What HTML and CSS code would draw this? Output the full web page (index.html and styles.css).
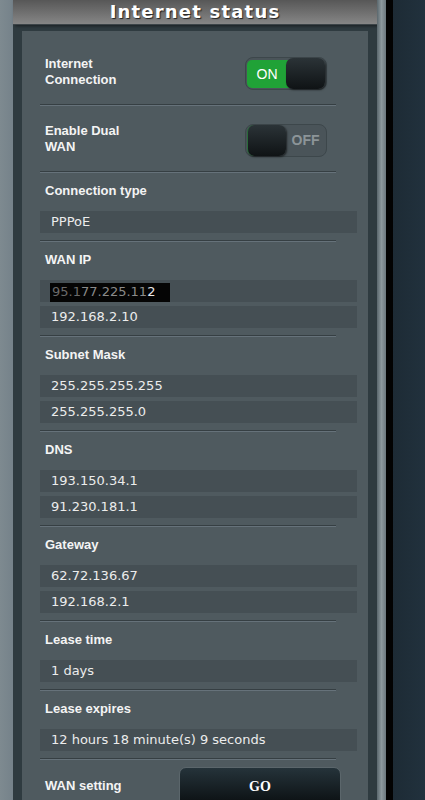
FILE: index.html
```html
<!DOCTYPE html>
<html lang="en">
<head>
    <meta charset="UTF-8">
    <meta name="viewport" content="width=device-width, initial-scale=1.0">
    <title>Internet status</title>
    <link rel="stylesheet" href="styles.css">
</head>
<body>
    <div class="frame">
        <div class="edge-left"></div>
        <div class="status">
            <header class="status-head">
                <h1>Internet status</h1>
            </header>
            <main class="panel">
                <div class="switch-row">
                    <span class="label">Internet<br>Connection</span>
                    <div class="toggle on">
                        <span class="track">ON</span>
                        <span class="knob"></span>
                    </div>
                </div>
                <div class="divider"></div>
                <div class="switch-row">
                    <span class="label">Enable Dual<br>WAN</span>
                    <div class="toggle off">
                        <span class="knob"></span>
                        <span class="track">OFF</span>
                    </div>
                </div>
                <div class="divider"></div>

                <section class="item">
                    <h2 class="label">Connection type</h2>
                    <div class="value">PPPoE</div>
                </section>
                <div class="divider"></div>

                <section class="item">
                    <h2 class="label">WAN IP</h2>
                    <div class="value"><span class="redact"><span class="dim">95.1</span><span class="mid">77.225.11</span>2</span></div>
                    <div class="value">192.168.2.10</div>
                </section>
                <div class="divider"></div>

                <section class="item">
                    <h2 class="label">Subnet Mask</h2>
                    <div class="value">255.255.255.255</div>
                    <div class="value">255.255.255.0</div>
                </section>
                <div class="divider"></div>

                <section class="item">
                    <h2 class="label">DNS</h2>
                    <div class="value">193.150.34.1</div>
                    <div class="value">91.230.181.1</div>
                </section>
                <div class="divider"></div>

                <section class="item">
                    <h2 class="label">Gateway</h2>
                    <div class="value">62.72.136.67</div>
                    <div class="value">192.168.2.1</div>
                </section>
                <div class="divider"></div>

                <section class="item">
                    <h2 class="label">Lease time</h2>
                    <div class="value">1 days</div>
                </section>
                <div class="divider"></div>

                <section class="item">
                    <h2 class="label">Lease expires</h2>
                    <div class="value">12 hours 18 minute(s) 9 seconds</div>
                </section>
                <div class="divider"></div>

                <div class="go-row">
                    <span class="label">WAN setting</span>
                    <button class="go">GO</button>
                </div>
            </main>
        </div>
        <div class="edge-right"></div>
        <div class="edge-black"></div>
        <div class="backdrop"></div>
    </div>
</body>
</html>
```

FILE: styles.css
```css
body {
    margin: 0;
    padding: 0;
    background: #21313d;
    font-family: "Liberation Sans", Arial, sans-serif;
    color: #f2f2f2;
    overflow: hidden;
}

.frame {
    display: flex;
    height: 800px;
}

.edge-left {
    width: 13px;
    background: linear-gradient(to right, #7e8a90, #75828a);
}

.status {
    width: 364px;
    background: #2f3b40;
    display: flex;
    flex-direction: column;
}

.status-head {
    height: 25px;
    background: linear-gradient(#575757, #868686);
    border-bottom: 1px solid #3c4448;
    box-shadow: 2px 1px 3px rgba(0, 0, 0, 0.5);
    box-sizing: border-box;
    text-align: center;
}

.status-head h1 {
    margin: 0;
    font-family: "DejaVu Sans", Verdana, sans-serif;
    font-size: 18px;
    font-weight: bold;
    letter-spacing: 1.2px;
    line-height: 24px;
    color: #fff;
    text-shadow: 1px 1px 1px #222;
}

.panel {
    margin: 6px 9px 0 9px;
    background: #4f5a5f;
    flex: 1;
    padding: 26px 11px 0 18px;
}

.label {
    font-size: 13px;
    font-weight: bold;
    line-height: 16px;
    color: #f4f4f4;
    margin: 0;
}

.switch-row {
    display: flex;
    align-items: center;
    justify-content: space-between;
    padding: 0 30px 0 5px;
    height: 33px;
}

.switch-row .label {
    margin-top: -4px;
}

.toggle {
    width: 82px;
    height: 33px;
    box-sizing: border-box;
    border: 1px solid #3d474b;
    border-radius: 8px;
    background: #4a5459;
    display: flex;
    align-items: center;
    padding: 1px;
}

.knob {
    width: 39px;
    height: 31px;
    box-sizing: border-box;
    border-radius: 7px;
    background: linear-gradient(#2b3337, #0f1315);
    box-shadow: 1px 1px 2px rgba(0, 0, 0, 0.6);
}

.track {
    flex: 1;
    font-size: 14px;
    text-align: center;
}

.toggle.on .track {
    height: 28px;
    line-height: 28px;
    background: #20a237;
    color: #fff;
    border-radius: 5px 0 0 5px;
    margin-right: -3px;
    text-indent: -2px;
}

.toggle.on .knob {
    position: relative;
}

.toggle.off .track {
    color: #8c9498;
    font-weight: bold;
    line-height: 29px;
}

.toggle.off .knob {
    border-left: 1px solid #2a6b3a;
}

.divider {
    height: 0;
    border-top: 1px solid #363f43;
    border-bottom: 1px solid #66727a;
    margin: 14px 21px 0 0;
}

.switch-row + .divider + .switch-row {
    margin-top: 18px;
}

.item {
    padding-top: 10px;
    padding-bottom: 7px;
}

.item .label {
    padding-left: 5px;
    margin-bottom: 12px;
}

.item + .divider {
    margin-top: 0;
}

.value {
    height: 22px;
    line-height: 22px;
    background: #454f54;
    padding-left: 11px;
    font-family: "DejaVu Sans", Verdana, sans-serif;
    font-size: 13px;
    color: #ececec;
}

.value + .value {
    margin-top: 4px;
}

.redact {
    display: inline-block;
    background: #050505;
    margin-left: -1px;
    margin-top: 3px;
    padding: 0 15px 0 2px;
    height: 19px;
    line-height: 17px;
    vertical-align: top;
    color: #e8e8e8;
}

.redact .dim {
    color: #6a6a6a;
}

.redact .mid {
    color: #8a8a8a;
}

.go-row {
    display: flex;
    align-items: center;
    margin-top: 7px;
    padding-left: 5px;
}

.go-row .label {
    width: 134px;
    margin-top: 4px;
}

.go {
    width: 162px;
    height: 40px;
    border: 1px solid #5b666b;
    border-radius: 7px;
    background: linear-gradient(#25333a, #0a0e10);
    color: #fff;
    font-family: "Liberation Serif", "Times New Roman", serif;
    font-size: 14px;
    font-weight: bold;
    padding: 0;
    margin-bottom: -6px;
}

.edge-right {
    width: 9px;
    background: linear-gradient(to right, #5a676d, #8d999e, #6b777d);
}

.edge-black {
    width: 7px;
    background: #030303;
}

.backdrop {
    flex: 1;
    background: linear-gradient(to right, #1d2b35, #21313d);
}
```
